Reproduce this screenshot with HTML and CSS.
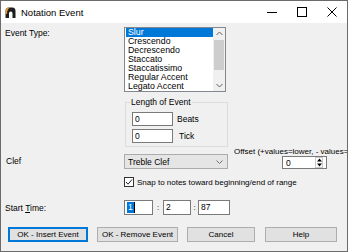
FILE: index.html
```html
<!DOCTYPE html>
<html lang="en">
<head>
    <meta charset="UTF-8">
    <meta name="viewport" content="width=device-width, initial-scale=1.0">
    <title>Notation Event</title>
    <link rel="stylesheet" href="styles.css">
</head>
<body>
    <div class="window">
        <!-- Barra de titulo -->
        <div class="titlebar">
            <svg class="app-icon" width="11" height="11" viewBox="0 0 11 11">
                <path d="M0.5 11 V4 Q0.5 0.5 4 0.5 H7.5 Q10.5 0.5 10.5 4 V11 H7.5 V6.5 Q7.5 4.5 5.8 4.5 Q4 4.5 4 6.5 V11 Z" fill="#1e1e1e"/>
                <path d="M0.5 7 V4 Q0.5 0.5 4 0.5 H5.5 Q2 1.5 2 7 Z" fill="#e49a3c"/>
            </svg>
            <span class="title">Notation Event</span>
            <div class="winbtns">
                <span class="winbtn">
                    <svg width="10" height="10" viewBox="0 0 10 10"><line x1="0" y1="5.5" x2="10" y2="5.5" stroke="#000" stroke-width="1"/></svg>
                </span>
                <span class="winbtn">
                    <svg width="10" height="10" viewBox="0 0 10 10"><rect x="0.5" y="0.5" width="9" height="9" fill="none" stroke="#000" stroke-width="1"/></svg>
                </span>
                <span class="winbtn">
                    <svg width="10" height="10" viewBox="0 0 10 10"><path d="M0.5 0.5 L9.5 9.5 M9.5 0.5 L0.5 9.5" stroke="#000" stroke-width="1"/></svg>
                </span>
            </div>
        </div>

        <div class="content">
            <!-- Tipo de evento -->
            <div class="row">
                <span class="lbl lbl-top">Event Type:</span>
                <div class="listbox">
                    <div class="items">
                        <div class="item sel">Slur</div>
                        <div class="item">Crescendo</div>
                        <div class="item">Decrescendo</div>
                        <div class="item">Staccato</div>
                        <div class="item">Staccatissimo</div>
                        <div class="item">Regular Accent</div>
                        <div class="item">Legato Accent</div>
                    </div>
                    <div class="vscroll">
                        <div class="arrow">
                            <svg width="7" height="5" viewBox="0 0 7 5"><polyline points="0.5,4 3.5,1 6.5,4" fill="none" stroke="#606060" stroke-width="1"/></svg>
                        </div>
                        <div class="track"><div class="thumb"></div></div>
                        <div class="arrow">
                            <svg width="7" height="5" viewBox="0 0 7 5"><polyline points="0.5,1 3.5,4 6.5,1" fill="none" stroke="#606060" stroke-width="1"/></svg>
                        </div>
                    </div>
                </div>
            </div>

            <!-- Duracion -->
            <fieldset class="length">
                <legend>Length of Event</legend>
                <div class="len-row">
                    <span class="field len-field">0</span>
                    <span>Beats</span>
                </div>
                <div class="len-row">
                    <span class="field len-field">0</span>
                    <span class="tick">Tick</span>
                </div>
            </fieldset>

            <!-- Clave y desplazamiento -->
            <div class="row">
                <span class="lbl lbl-clef">Clef</span>
                <div class="combo">
                    <span>Treble Clef</span>
                    <svg width="7" height="4" viewBox="0 0 7 4"><polyline points="0.5,0.5 3.5,3.5 6.5,0.5" fill="none" stroke="#707070" stroke-width="1"/></svg>
                </div>
                <div class="offset">
                    <span class="offset-lbl">Offset (+values=lower, - values= higher)</span>
                    <div class="field spinner">
                        <span class="spin-val">0</span>
                        <span class="spin-btn">
                            <svg width="5" height="9" viewBox="0 0 5 9"><path d="M0 3.5 L2.5 0.5 L5 3.5 Z M0 5.5 L2.5 8.5 L5 5.5 Z" fill="#000"/></svg>
                        </span>
                    </div>
                </div>
            </div>

            <div class="snap">
                <span class="check">
                    <svg width="8" height="8" viewBox="0 0 8 8"><polyline points="1,4 3,6.2 7,1.5" fill="none" stroke="#222" stroke-width="1"/></svg>
                </span>
                <span>Snap to notes toward beginning/end of range</span>
            </div>

            <!-- Tiempo de inicio -->
            <div class="row time-row">
                <span class="lbl">Start <u>T</u>ime:</span>
                <span class="field t1"><span class="selected">1</span><span class="caret"></span></span>
                <span class="colon c1">:</span>
                <span class="field t2">2</span>
                <span class="colon c2">:</span>
                <span class="field t3">87</span>
            </div>

            <!-- Botones -->
            <div class="buttons">
                <button class="btn focus b1">OK - Insert Event</button>
                <button class="btn b2">OK - Remove Event</button>
                <button class="btn b3">Cancel</button>
                <button class="btn b4">Help</button>
            </div>
        </div>
    </div>
</body>
</html>
```

FILE: styles.css
```css
* {
    box-sizing: border-box;
}
body {
    margin: 0;
    font-family: "Liberation Sans", Arial, sans-serif;
    font-size: 8px;
    color: #000;
}
.window {
    width: 348px;
    height: 252px;
    border: 1px solid #6b6b6b;
    background-color: #f0f0f0;
    overflow: hidden;
}
.titlebar {
    height: 22px;
    background-color: #fff;
    display: flex;
    align-items: center;
    padding-left: 4px;
}
.app-icon {
    margin-right: 5px;
}
.title {
    flex: 1;
    font-size: 9.5px;
}
.winbtns {
    display: flex;
}
.winbtn {
    width: 30px;
    height: 22px;
    display: flex;
    align-items: center;
    justify-content: center;
}
.content {
    padding: 4px 0 0 4px;
}
.row {
    display: flex;
    align-items: flex-start;
}
.row > * {
    flex-shrink: 0;
}
.lbl {
    width: 119px;
    font-size: 8.5px;
}
.lbl-top {
    margin-top: 1px;
}
.listbox {
    width: 102px;
    height: 65px;
    border: 1px solid #828790;
    background-color: #fff;
    display: flex;
}
.items {
    flex: 1;
    padding-left: 1px;
}
.item {
    height: 9px;
    line-height: 9px;
    padding-left: 2px;
    font-size: 8.8px;
    white-space: nowrap;
}
.item.sel {
    background-color: #0078d7;
    color: #fff;
}
.vscroll {
    width: 12px;
    background-color: #f0f0f0;
    display: flex;
    flex-direction: column;
}
.arrow {
    height: 11px;
    display: flex;
    align-items: center;
    justify-content: center;
}
.track {
    flex: 1;
    padding: 0 1px;
}
.thumb {
    margin-top: 1px;
    height: 30px;
    background-color: #cdcdcd;
}
.length {
    margin: 5px 0 0 120px;
    width: 103px;
    padding: 5px 6px 3px;
    border: 1px solid #dcdcdc;
    font-size: 8.5px;
}
.length legend {
    padding: 0 1px;
    margin-left: -2px;
    line-height: 10px;
}
.len-row {
    display: flex;
    align-items: center;
    gap: 4px;
}
.len-row + .len-row {
    margin-top: 3px;
}
.field {
    display: inline-block;
    background-color: #fff;
    border: 1px solid #7a7a7a;
    padding-left: 2px;
    font-size: 8.5px;
}
.len-field {
    width: 41px;
    height: 14px;
    line-height: 12px;
}
.tick {
    margin-left: 2px;
}
.lbl-clef {
    margin-top: 7px;
    line-height: 15px;
    padding-left: 1px;
}
.combo {
    margin-top: 7px;
    width: 104px;
    height: 15px;
    background-color: #e5e5e5;
    border: 1px solid #acacac;
    display: flex;
    align-items: center;
    justify-content: space-between;
    padding: 0 4px 0 3px;
    font-size: 8.5px;
}
.offset {
    margin-left: 6px;
    display: flex;
    flex-direction: column;
    align-items: flex-start;
}
.offset-lbl {
    white-space: nowrap;
    line-height: 9px;
}
.spinner {
    margin-left: 48px;
    width: 45px;
    height: 13px;
    display: flex;
    align-items: center;
    justify-content: space-between;
    padding: 0 3px 0 3px;
}
.spin-btn {
    width: 8px;
    height: 11px;
    border: 1px solid #c8c8c8;
    display: flex;
    align-items: center;
    justify-content: center;
}
.snap {
    margin: 8px 0 0 119px;
    display: flex;
    align-items: center;
    gap: 3px;
}
.check {
    width: 10px;
    height: 10px;
    border: 1px solid #333;
    background-color: #fff;
    display: flex;
    align-items: center;
    justify-content: center;
}
.time-row {
    margin-top: 13px;
    align-items: center;
}
.time-row .field {
    height: 15px;
    line-height: 13px;
}
.t1 {
    width: 29px;
    display: flex;
    align-items: center;
}
.selected {
    background-color: #0078d7;
    color: #fff;
    line-height: 11px;
    padding: 0 1px;
}
.caret {
    width: 1px;
    height: 11px;
    background-color: #000;
}
.t2 {
    width: 28px;
}
.t3 {
    width: 32px;
}
.colon {
    text-align: center;
}
.c1 {
    width: 10px;
}
.c2 {
    width: 7px;
}
.buttons {
    margin-top: 12px;
    padding-left: 3px;
    display: flex;
    gap: 9px;
}
.btn {
    height: 15px;
    padding: 0;
    font-family: "Liberation Sans", Arial, sans-serif;
    font-size: 8px;
    color: #000;
    background-color: #e1e1e1;
    border: 1px solid #adadad;
    border-radius: 0;
}
.btn.focus {
    border-color: #0078d7;
    box-shadow: inset 0 0 0 1px #0078d7;
}
.b1 {
    width: 80px;
}
.b2 {
    width: 81px;
}
.b3 {
    width: 68px;
}
.b4 {
    width: 72px;
    margin-left: 1px;
}
```
